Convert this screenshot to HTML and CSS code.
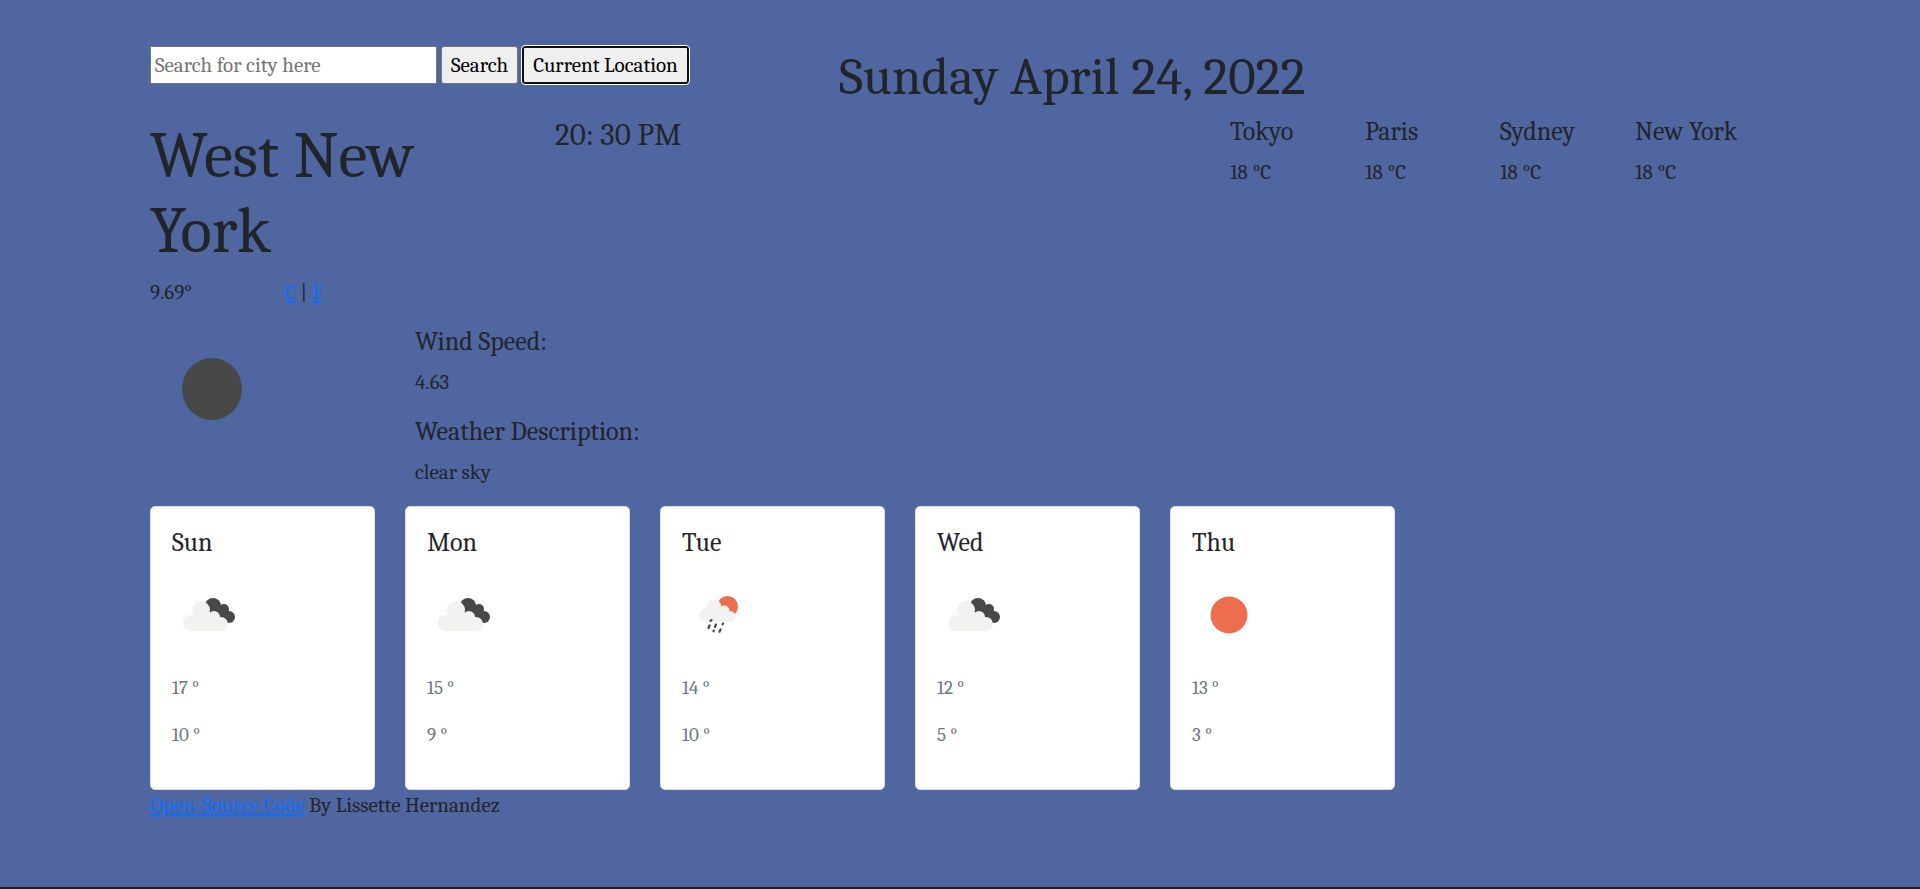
FILE: index.html
```html
<!DOCTYPE html>
<html lang="en">
<head>
<meta charset="utf-8">
<title>Weather</title>
<link rel="stylesheet" href="styles.css">
</head>
<body>
<svg class="sprite" aria-hidden="true">
  <symbol id="clouds" viewBox="0 0 75 75">
    <g fill="#484849"><circle cx="41" cy="28" r="8"/><circle cx="52" cy="31" r="5"/><circle cx="57" cy="39" r="6"/><path d="M35 33l11-8 12 9-2 11-12-2z"/></g>
    <g fill="#f2f2f1"><circle cx="29" cy="32" r="9"/><circle cx="19" cy="45" r="8"/><circle cx="42" cy="39" r="6"/><circle cx="49" cy="46" r="7"/><path d="M19 53V40l10-9 15 6 7 9-2 7z"/></g>
  </symbol>
  <symbol id="rain" viewBox="0 0 75 75">
    <circle cx="45.500" cy="28.500" r="10.500" fill="#ec6e4c"/>
    <g fill="#f2f2f2"><circle cx="32" cy="29" r="7.500"/><circle cx="24" cy="37" r="6.800"/><circle cx="42.500" cy="32.500" r="5"/><circle cx="48" cy="38.500" r="5.500"/><path d="M24 43.800V33l8-5 10 4 6 6v5.800z"/></g>
    <path d="M29.500 42l-1 1M27.500 47.500l-1 2.500M34 46.500l-1 2.500M31.800 52.500l-.3.800M41 45.500l-.5.800M38.500 51.500l-1 2.300" fill="none" stroke="#484848" stroke-width="2.200" stroke-linecap="round"/>
  </symbol>
  <symbol id="sun" viewBox="0 0 75 75"><circle cx="37" cy="37" r="18.500" fill="#ec6e4c"/></symbol>
</svg>
<main class="page">
  <header class="top">
    <form class="search">
      <input class="field" type="text" placeholder="Search for city here" aria-label="City">
      <button class="btn" type="button">Search</button>
      <button class="btn btn-focus" type="button">Current Location</button>
    </form>
    <h1 class="date">Sunday April 24, 2022</h1>
  </header>
  <section class="grid">
    <h2 class="city">West New York</h2>
    <h3 class="time">20: 30 PM</h3>
    <div class="place place-first"><h4 class="title">Tokyo</h4><p class="text">18 °C</p></div>
    <div class="place"><h4 class="title">Paris</h4><p class="text">18 °C</p></div>
    <div class="place"><h4 class="title">Sydney</h4><p class="text">18 °C</p></div>
    <div class="place"><h4 class="title">New York</h4><p class="text">18 °C</p></div>
  </section>
  <section class="grid reading">
    <p class="temp">9.69°</p>
    <p class="units"><a href="#c">C</a> | <a href="#f">F</a></p>
  </section>
  <section class="now">
    <svg class="now-icon" viewBox="0 0 125 125" role="img" aria-label="clear sky"><ellipse cx="62" cy="62" rx="30" ry="31" fill="#484849"/></svg>
    <div class="details">
      <div><h4 class="title">Wind Speed:</h4><p class="text">4.63</p></div>
      <div><h4 class="title">Weather Description:</h4><p class="text">clear sky</p></div>
    </div>
  </section>
  <section class="forecast">
    <article class="card"><h4 class="title">Sun</h4><svg class="icon"><use href="#clouds"/></svg><p class="deg">17 °</p><p class="deg">10 °</p></article>
    <article class="card"><h4 class="title">Mon</h4><svg class="icon"><use href="#clouds"/></svg><p class="deg">15 °</p><p class="deg">9 °</p></article>
    <article class="card"><h4 class="title">Tue</h4><svg class="icon"><use href="#rain"/></svg><p class="deg">14 °</p><p class="deg">10 °</p></article>
    <article class="card"><h4 class="title">Wed</h4><svg class="icon"><use href="#clouds"/></svg><p class="deg">12 °</p><p class="deg">5 °</p></article>
    <article class="card"><h4 class="title">Thu</h4><svg class="icon"><use href="#sun"/></svg><p class="deg">13 °</p><p class="deg">3 °</p></article>
  </section>
  <footer><a href="#source">Open-Source Code</a> By Lissette Hernandez</footer>
</main>
</body>
</html>
```
FILE: styles.css
```css
* { box-sizing: border-box; }
body {
  margin: 0;
  min-height: 100vh;
  background: #5066a1;
  border-bottom: 2px solid #1c2028;
  color: #212529;
  font: 21px/30px Cambria, Caladea, "Liberation Serif", serif;
}
h1, h2, h3, h4, p { margin: 0; font-weight: 400; }
a { color: #0d6efd; }
.sprite { display: none; }
.page { padding: 46px 150px 40px; }
.top, .grid { display: grid; grid-template-columns: repeat(12, minmax(0, 1fr)); }
.search { grid-column: span 5; display: flex; align-items: flex-start; gap: 4px; }
.field, .btn { height: 38px; border: 1px solid #767676; font: inherit; }
.field { width: 287px; padding: 0 4px; background: #fff; }
.field::placeholder { color: #757575; }
.btn { padding: 0 9px; border-radius: 3px; background: #efefef; color: #000; white-space: nowrap; }
.btn-focus { border: 2px solid #101010; outline: 1px solid #fff; padding: 0 9px; }
.date { grid-column: span 7; padding-left: 14px; font-size: 53px; line-height: 62px; margin-bottom: 9px; white-space: nowrap; }
.city { grid-column: span 3; padding: 2px 10px 0 0; font-size: 65px; line-height: 75px; }
.time { grid-column: span 3; font-size: 31px; line-height: 36px; }
.place-first { grid-column-start: 9; }
.title { font-size: 26px; line-height: 30px; margin-bottom: 10px; white-space: nowrap; }
.reading { margin: 8px 0 20px; }
.now { display: flex; gap: 140px; }
.now-icon { width: 125px; height: 125px; }
.details { display: grid; gap: 20px; }
.forecast { display: flex; gap: 30px; margin: 19px 0 0; }
.card { flex: 0 1 225px; padding: 21px 21px 20px; border: 1px solid #dfdfdf; border-radius: 5px; background: #fff; }
.icon { display: block; width: 75px; height: 75px; margin: 20px 0 22px; }
.deg { margin-bottom: 20px; font-size: 19px; line-height: 27px; color: #6c757d; }
```
